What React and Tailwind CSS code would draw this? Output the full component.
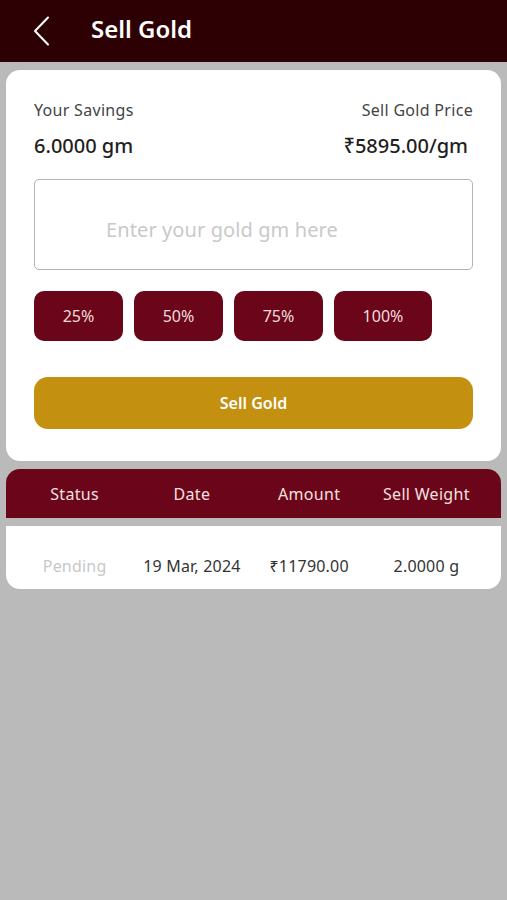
import React, { useState } from 'react';

const FONT = "font-['Noto_Sans','Open_Sans',sans-serif]";

const PERCENTS = [
  { label: '25%', w: 'w-[89px]' },
  { label: '50%', w: 'w-[89px]' },
  { label: '75%', w: 'w-[89px]' },
  { label: '100%', w: 'w-[98px]' },
];

const HISTORY = [
  { status: 'Pending', date: '19 Mar, 2024', amount: '₹11790.00', weight: '2.0000 g' },
];

export default function App() {
  const [grams, setGrams] = useState('');

  return (
    <div className={`min-h-[900px] w-full bg-[#bababa] ${FONT}`}>
      {/* Top bar */}
      <div className="h-[62px] bg-[#2d0004] flex items-center pl-[33px]">
        <svg width="17" height="30" viewBox="0 0 17 30" fill="none" stroke="white" strokeWidth="2" strokeLinecap="round" strokeLinejoin="round">
          <polyline points="15 1.5 2 15 15 28.5" />
        </svg>
        <h1 className="ml-[41px] text-white text-[24px] font-semibold leading-none -mt-[4px]">Sell Gold</h1>
      </div>

      {/* Sell card */}
      <div className="mx-[6px] mt-[8px] bg-white rounded-[14px] px-[28px] pt-[30px] pb-[32px]">
        <div className="flex justify-between text-[16px] text-[#444] leading-[20px] tracking-[0.3px]">
          <span>Your Savings</span>
          <span>Sell Gold Price</span>
        </div>
        <div className="flex justify-between mt-[14px] text-[20px] font-medium text-[#1f1f1f] leading-[24px]">
          <span>6.0000 gm</span>
          <span className="pr-[5px]">₹5895.00/gm</span>
        </div>

        <input
          value={grams}
          onChange={e => setGrams(e.target.value)}
          placeholder="Enter your gold gm here"
          className="block mt-[21px] w-full h-[91px] rounded-[5px] border-[1.5px] border-[#b3b3b3] pl-[71px] pt-[10px] text-[20px] tracking-[0.1px] text-[#333] placeholder:text-[#c9c9c9] outline-none"
        />

        <div className="flex gap-[11px] mt-[21px]">
          {PERCENTS.map(p => (
            <button key={p.label} className={`${p.w} h-[50px] rounded-[10px] bg-[#6b0519] text-[#f1dcdc] text-[16px]`}>
              {p.label}
            </button>
          ))}
        </div>

        <button className="mt-[36px] w-full h-[52px] rounded-[14px] bg-[#c3900f] text-white text-[16px] font-semibold">
          Sell Gold
        </button>
      </div>

      {/* History table */}
      <div className="mx-[6px] mt-[8px]">
        <div className="h-[49px] bg-[#6b0519] rounded-t-[14px] grid grid-cols-4 pl-[10px] pr-[16px] items-center text-[16px] tracking-[0.3px] text-[#f3e0e0]">
          <span className="text-center">Status</span>
          <span className="text-center">Date</span>
          <span className="text-center">Amount</span>
          <span className="text-center">Sell Weight</span>
        </div>
        {HISTORY.map((h, i) => (
          <div key={i} className="mt-[8px] h-[63px] bg-white rounded-b-[14px] grid grid-cols-4 pl-[10px] pr-[16px] items-center pt-[16px] text-[16px] tracking-[0.2px] text-[#333]">
            <span className="text-center text-[#c8c8c8]">{h.status}</span>
            <span className="text-center">{h.date}</span>
            <span className="text-center">{h.amount}</span>
            <span className="text-center">{h.weight}</span>
          </div>
        ))}
      </div>
    </div>
  );
}
